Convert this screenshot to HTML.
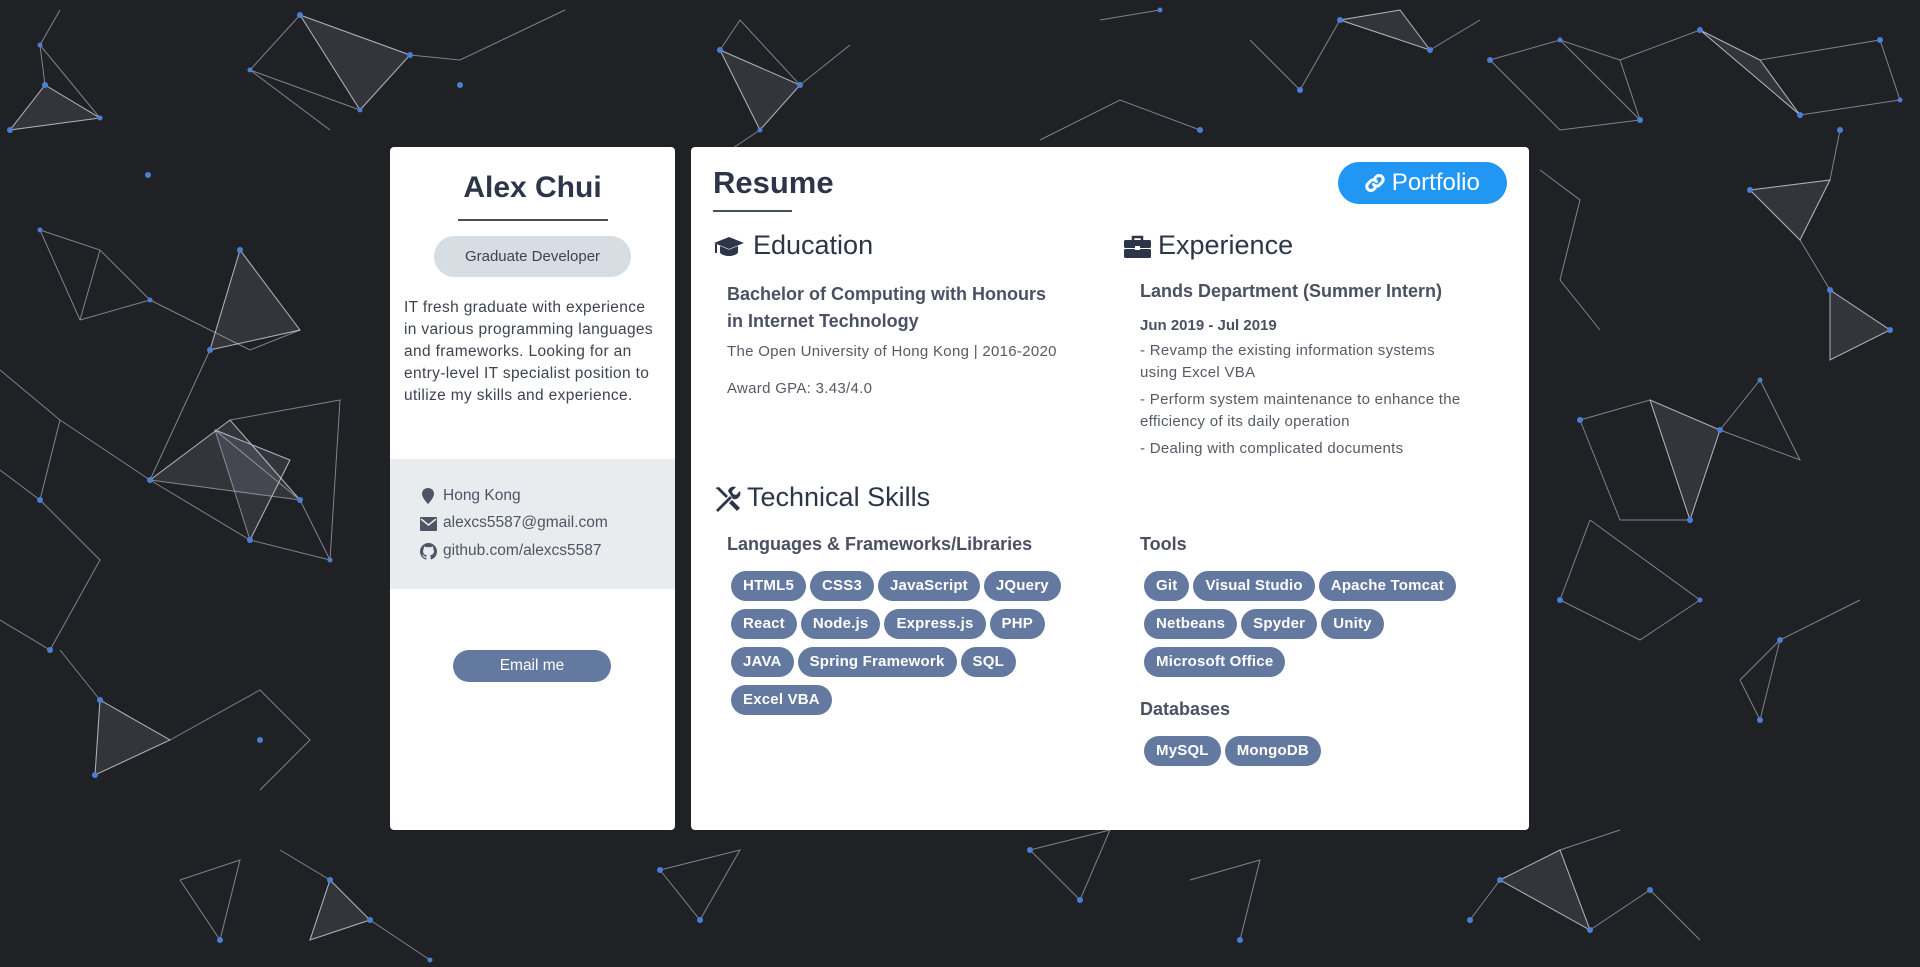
<!DOCTYPE html>
<html><head><meta charset="utf-8">
<style>
*{margin:0;padding:0;box-sizing:border-box}
body{width:1920px;height:967px;background:#202124;font-family:"Liberation Sans",sans-serif;position:relative;overflow:hidden}
svg.bg{position:absolute;left:0;top:0}
.card{position:absolute;background:#fff;border-radius:4px}
#left{left:390px;top:147px;width:285px;height:683px}
#right{left:691px;top:147px;width:838px;height:683px}
.a{position:absolute;white-space:nowrap}
.tag{display:inline-block;height:30px;line-height:30px;padding:0 12px;border-radius:15px;background:#6479a0;color:#fff;font-size:15px;font-weight:bold;margin:0 4px 8px 0;letter-spacing:.2px}
.tags{position:absolute;width:360px}
.sub{color:#555a66;font-size:15px;letter-spacing:.3px}
</style></head><body>
<svg class="bg" width="1920" height="967" stroke="rgba(210,210,225,0.55)" stroke-width="1" fill="none">
<g fill="rgba(200,200,230,0.12)">
<polygon points="10,130 45,85 100,118"/><polygon points="300,15 410,55 360,110"/><polygon points="720,50 800,85 760,130"/>
<polygon points="1340,20 1400,10 1430,50"/><polygon points="1700,30 1760,60 1800,115"/><polygon points="215,430 290,460 250,540"/>
<polygon points="150,480 230,420 300,500"/><polygon points="1650,400 1720,430 1690,520"/><polygon points="100,700 170,740 95,775"/>
<polygon points="1500,880 1560,850 1590,930"/><polygon points="330,880 370,920 310,940"/><polygon points="1750,190 1830,180 1800,240"/>
<polygon points="1830,290 1890,330 1830,360"/><polygon points="240,250 300,330 210,350"/>
</g>
<path d="M10,130 L45,85 L100,118 L10,130 M45,85 L40,45 L100,118 M40,45 L60,10"/>
<path d="M300,15 L410,55 L360,110 L300,15 L250,70 L360,110 M410,55 L460,60 L565,10 M250,70 L330,130"/>
<path d="M720,50 L800,85 L760,130 L720,50 L740,20 L800,85 L850,45 M760,130 L700,170"/>
<path d="M1340,20 L1400,10 L1430,50 L1340,20 L1300,90 M1430,50 L1480,20"/>
<path d="M1490,60 L1560,40 L1620,60 L1640,120 L1560,130 L1490,60 M1560,40 L1640,120 M1620,60 L1700,30 L1760,60 L1800,115 L1700,30 M1760,60 L1880,40 L1900,100 L1800,115"/>
<path d="M40,230 L100,250 L150,300 L80,320 L40,230 M100,250 L80,320 M150,300 L250,350 L300,330"/>
<path d="M240,250 L300,330 L210,350 L240,250 M210,350 L150,480 L230,420 L300,500 L215,430 L290,460 L250,540 L150,480 M300,500 L330,560 L250,540 M230,420 L340,400 L330,560"/>
<path d="M0,370 L60,420 L40,500 L0,470 M60,420 L150,480 M40,500 L100,560 L50,650 L0,620"/>
<path d="M100,700 L170,740 L95,775 L100,700 L60,650 M170,740 L260,690 L310,740 L260,790"/>
<path d="M1580,420 L1650,400 L1720,430 L1690,520 L1620,520 L1580,420 M1650,400 L1690,520 M1720,430 L1760,380 L1800,460 L1720,430"/>
<path d="M1750,190 L1830,180 L1800,240 L1750,190 M1830,180 L1840,130 M1800,240 L1830,290 L1890,330 L1830,360 L1830,290"/>
<path d="M1540,170 L1580,200 L1560,280 L1600,330"/>
<path d="M1590,520 L1560,600 L1640,640 L1700,600 L1590,520 M1740,680 L1780,640 L1760,720 L1740,680 M1780,640 L1860,600"/>
<path d="M1500,880 L1560,850 L1590,930 L1500,880 L1470,920 M1590,930 L1650,890 L1700,940 M1560,850 L1620,830"/>
<path d="M330,880 L370,920 L310,940 L330,880 L280,850 M370,920 L430,960 M180,880 L240,860 L220,940 L180,880"/>
<path d="M660,870 L740,850 L700,920 L660,870 M1030,850 L1110,830 L1080,900 L1030,850 M1190,880 L1260,860 L1240,940"/>
<path d="M1040,140 L1120,100 L1200,130 M1250,40 L1300,90 M1100,20 L1160,10"/>
<g fill="#4a7fd4" stroke="none">
<circle cx="10" cy="130" r="3"/><circle cx="45" cy="85" r="3"/><circle cx="100" cy="118" r="2.5"/><circle cx="40" cy="45" r="2.5"/>
<circle cx="300" cy="15" r="3"/><circle cx="410" cy="55" r="3"/><circle cx="360" cy="110" r="2.5"/><circle cx="250" cy="70" r="2.5"/><circle cx="460" cy="85" r="3"/>
<circle cx="720" cy="50" r="3"/><circle cx="800" cy="85" r="3"/><circle cx="760" cy="130" r="2.5"/><circle cx="148" cy="175" r="3"/>
<circle cx="1340" cy="20" r="3"/><circle cx="1430" cy="50" r="3"/><circle cx="1490" cy="60" r="3"/><circle cx="1560" cy="40" r="2.5"/><circle cx="1640" cy="120" r="3"/>
<circle cx="1700" cy="30" r="3"/><circle cx="1800" cy="115" r="3"/><circle cx="1880" cy="40" r="3"/><circle cx="1900" cy="100" r="2.5"/>
<circle cx="40" cy="230" r="2.5"/><circle cx="150" cy="300" r="2.5"/><circle cx="240" cy="250" r="3"/><circle cx="210" cy="350" r="3"/>
<circle cx="150" cy="480" r="3"/><circle cx="300" cy="500" r="3"/><circle cx="250" cy="540" r="3"/><circle cx="330" cy="560" r="2.5"/>
<circle cx="40" cy="500" r="3"/><circle cx="50" cy="650" r="3"/><circle cx="100" cy="700" r="3"/><circle cx="95" cy="775" r="3"/><circle cx="260" cy="740" r="3"/>
<circle cx="1580" cy="420" r="3"/><circle cx="1690" cy="520" r="3"/><circle cx="1720" cy="430" r="3"/><circle cx="1760" cy="380" r="2.5"/>
<circle cx="1750" cy="190" r="3"/><circle cx="1840" cy="130" r="3"/><circle cx="1830" cy="290" r="3"/><circle cx="1890" cy="330" r="3"/>
<circle cx="1560" cy="600" r="3"/><circle cx="1700" cy="600" r="2.5"/><circle cx="1780" cy="640" r="3"/><circle cx="1760" cy="720" r="3"/>
<circle cx="1500" cy="880" r="3"/><circle cx="1590" cy="930" r="3"/><circle cx="1650" cy="890" r="3"/><circle cx="1470" cy="920" r="3"/>
<circle cx="330" cy="880" r="3"/><circle cx="370" cy="920" r="3"/><circle cx="220" cy="940" r="3"/><circle cx="430" cy="960" r="2.5"/>
<circle cx="660" cy="870" r="3"/><circle cx="700" cy="920" r="3"/><circle cx="1030" cy="850" r="3"/><circle cx="1080" cy="900" r="3"/><circle cx="1240" cy="940" r="3"/>
<circle cx="1200" cy="130" r="3"/><circle cx="1300" cy="90" r="3"/><circle cx="1160" cy="10" r="2.5"/>
</g>
</svg>

<div class="card" id="left">
  <div class="a" style="left:0;width:285px;text-align:center;top:24px;font-size:30px;font-weight:bold;color:#2d3548">Alex Chui</div>
  <div class="a" style="left:68px;top:72px;width:150px;height:2px;background:#4a4f5c"></div>
  <div class="a" style="left:44px;top:89px;width:197px;height:41px;border-radius:21px;background:#d7dee3;text-align:center;line-height:41px;font-size:15px;color:#3d4350">Graduate Developer</div>
  <div style="position:absolute;left:14px;top:150px;width:252px;font-size:15.5px;line-height:22px;color:#3d4350;letter-spacing:.35px">IT fresh graduate with experience in various programming languages and frameworks. Looking for an entry-level IT specialist position to utilize my skills and experience.</div>
  <div class="a" style="left:0;top:312px;width:285px;height:130px;background:#e9ecef"></div>
  <svg class="a" style="left:30px;top:340px" width="16" height="18" viewBox="0 0 16 18"><path d="M8 1C4.5 1 2 3.5 2 6.7 2 11 8 17 8 17s6-6 6-10.3C14 3.5 11.5 1 8 1z" fill="#4e5565"/></svg>
  <div class="a" style="left:53px;top:340px;font-size:15.5px;color:#4e5565">Hong Kong</div>
  <svg class="a" style="left:30px;top:370px" width="17" height="14" viewBox="0 0 17 14"><rect x="0" y="0" width="17" height="14" rx="1" fill="#4e5565"/><path d="M1 2L8.5 8 16 2" stroke="#e9ecef" stroke-width="1.5" fill="none"/></svg>
  <div class="a" style="left:53px;top:367px;font-size:15.5px;color:#4e5565">alexcs5587@gmail.com</div>
  <svg class="a" style="left:30px;top:396px" width="17" height="17" viewBox="0 0 16 16"><path fill="#4e5565" d="M8 0C3.6 0 0 3.6 0 8c0 3.5 2.3 6.5 5.5 7.6.4.1.5-.2.5-.4v-1.4c-2.2.5-2.7-1-2.7-1-.4-.9-.9-1.2-.9-1.2-.7-.5.1-.5.1-.5.8.1 1.2.8 1.2.8.7 1.3 1.9.9 2.3.7.1-.5.3-.9.5-1.1-1.8-.2-3.6-.9-3.6-4 0-.9.3-1.6.8-2.1-.1-.2-.4-1 .1-2.1 0 0 .7-.2 2.200.8.6-.2 1.3-.3 2-.3s1.4.1 2 .3c1.5-1 2.2-.8 2.2-.8.4 1.1.2 1.9.1 2.1.5.6.8 1.3.8 2.1 0 3.1-1.9 3.7-3.6 3.9.3.3.5.8.5 1.5v2.2c0 .2.1.5.6.4C13.7 14.5 16 11.5 16 8c0-4.4-3.6-8-8-8z"/></svg>
  <div class="a" style="left:53px;top:395px;font-size:15.5px;color:#4e5565">github.com/alexcs5587</div>
  <div class="a" style="left:63px;top:503px;width:158px;height:32px;border-radius:16px;background:#6479a0;color:#fff;text-align:center;line-height:32px;font-size:15.5px">Email me</div>
</div>

<div class="card" id="right">
  <div class="a" style="left:22px;top:18px;font-size:31px;font-weight:bold;color:#2d3548">Resume</div>
  <div class="a" style="left:22px;top:63px;width:79px;height:2px;background:#4a4f5c"></div>
  <div class="a" style="left:647px;top:15px;width:169px;height:42px;border-radius:21px;background:#2196f3;color:#fff;font-size:24px;line-height:42px;text-align:center">
    <svg style="vertical-align:-3px" width="20" height="20" viewBox="0 0 20 20"><g stroke="#fff" stroke-width="3" fill="none" stroke-linecap="round"><path d="M8.5 11.5a4 4 0 0 0 6 .4l2.5-2.5a4 4 0 0 0-5.7-5.700l-1.3 1.3"/><path d="M11.5 8.5a4 4 0 0 0-6-.4L3 10.6a4 4 0 0 0 5.7 5.7l1.3-1.3"/></g></svg> Portfolio</div>

  <svg class="a" style="left:22px;top:89px" width="32" height="22" viewBox="0 0 32 22"><path d="M16 1L1 7l15 6 15-6z" fill="#2d3548"/><path d="M7 10v6c0 2 4 4 9 4s9-2 9-4v-6l-9 3.6z" fill="#2d3548"/><path d="M3 8v9" stroke="#2d3548" stroke-width="2"/></svg>
  <div class="a" style="left:62px;top:83px;font-size:27px;color:#2d3548">Education</div>
  <div class="a" style="left:36px;top:134px;font-size:18px;line-height:27px;font-weight:bold;color:#4b5162">Bachelor of Computing with Honours<br>in Internet Technology</div>
  <div class="a sub" style="left:36px;top:196px">The Open University of Hong Kong | 2016-2020</div>
  <div class="a sub" style="left:36px;top:233px">Award GPA: 3.43/4.0</div>

  <svg class="a" style="left:433px;top:88px" width="27" height="23" viewBox="0 0 27 23"><path d="M9 5V2h9v3" stroke="#2d3548" stroke-width="2.5" fill="none"/><rect x="0" y="5" width="27" height="8" rx="1.5" fill="#2d3548"/><rect x="0" y="14" width="27" height="9" rx="1.5" fill="#2d3548"/><rect x="11" y="11" width="5" height="4" fill="#fff"/></svg>
  <div class="a" style="left:467px;top:83px;font-size:27px;color:#2d3548">Experience</div>
  <div class="a" style="left:449px;top:134px;font-size:18px;font-weight:bold;color:#4b5162">Lands Department (Summer Intern)</div>
  <div class="a" style="left:449px;top:170px;font-size:15px;font-weight:bold;color:#4b5162">Jun 2019 - Jul 2019</div>
  <div style="position:absolute;left:449px;top:193px;width:335px;font-size:15px;line-height:22px;color:#555a66;letter-spacing:.3px">
    <p style="margin-bottom:5px">- Revamp the existing information systems using Excel VBA</p>
    <p style="margin-bottom:5px">- Perform system maintenance to enhance the efficiency of its daily operation</p>
    <p>- Dealing with complicated documents</p></div>

  <svg class="a" style="left:22px;top:339px" width="28" height="26" viewBox="0 0 28 26"><g fill="#2d3548"><path d="M3 24L17 10l2 2L5 26z"/><path d="M15 5a6 6 0 0 1 8-4l-4 4 1 3 3 1 4-4a6 6 0 0 1-7 8z"/><path d="M2 2l4-1 9 9-2 2-9-9z"/><path d="M16 17l3-3 8 8-3 3z"/></g></svg>
  <div class="a" style="left:56px;top:335px;font-size:27px;color:#2d3548">Technical Skills</div>

  <div class="a" style="left:36px;top:387px;font-size:18px;font-weight:bold;color:#4b5162">Languages &amp; Frameworks/Libraries</div>
  <div class="tags" style="left:40px;top:424px"><span class="tag">HTML5</span><span class="tag">CSS3</span><span class="tag">JavaScript</span><span class="tag">JQuery</span><br><span class="tag">React</span><span class="tag">Node.js</span><span class="tag">Express.js</span><span class="tag">PHP</span><br><span class="tag">JAVA</span><span class="tag">Spring Framework</span><span class="tag">SQL</span><br><span class="tag">Excel VBA</span></div>

  <div class="a" style="left:449px;top:387px;font-size:18px;font-weight:bold;color:#4b5162">Tools</div>
  <div class="tags" style="left:453px;top:424px"><span class="tag">Git</span><span class="tag">Visual Studio</span><span class="tag">Apache Tomcat</span><br><span class="tag">Netbeans</span><span class="tag">Spyder</span><span class="tag">Unity</span><br><span class="tag">Microsoft Office</span></div>
  <div class="a" style="left:449px;top:552px;font-size:18px;font-weight:bold;color:#4b5162">Databases</div>
  <div class="tags" style="left:453px;top:589px"><span class="tag">MySQL</span><span class="tag">MongoDB</span></div>
</div>
</body></html>
